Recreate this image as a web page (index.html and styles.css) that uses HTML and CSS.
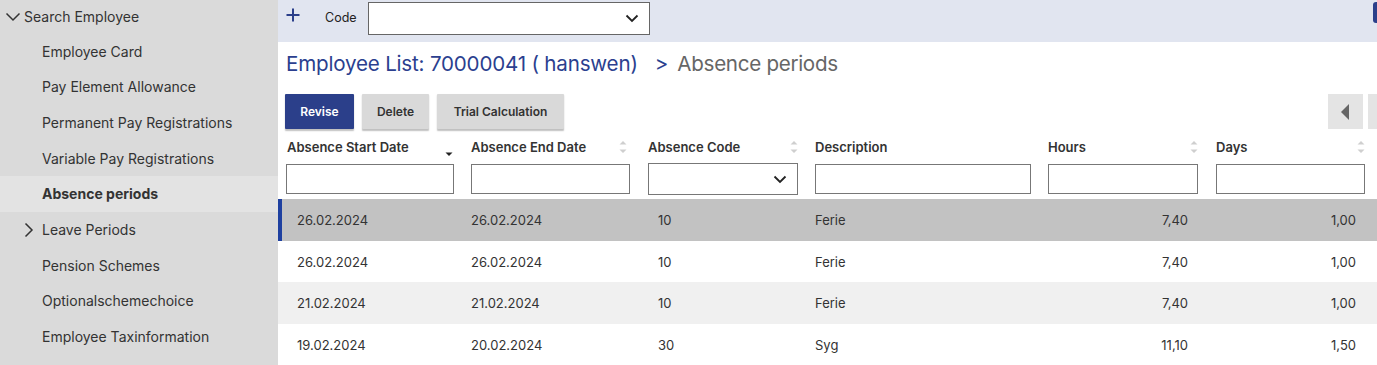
FILE: index.html
```html
<!DOCTYPE html>
<html>
<head>
<meta charset="utf-8">
<link rel="stylesheet" href="styles.css">
</head>
<body>
<aside class="sidebar">
  <div class="nav-item nav-top">
    <svg class="chev-down" width="16" height="10" viewBox="0 0 16 10"><path d="M1.5 1.5 L8 8 L14.5 1.5" fill="none" stroke="#333" stroke-width="1.5"/></svg>
    <span>Search Employee</span>
  </div>
  <div class="nav-item sub">Employee Card</div>
  <div class="nav-item sub">Pay Element Allowance</div>
  <div class="nav-item sub">Permanent Pay Registrations</div>
  <div class="nav-item sub">Variable Pay Registrations</div>
  <div class="nav-item sub active">Absence periods</div>
  <div class="nav-item sub has-chev">
    <svg class="chev-right" width="10" height="16" viewBox="0 0 10 16"><path d="M1.5 1.5 L8 8 L1.5 14.5" fill="none" stroke="#333" stroke-width="1.5"/></svg>
    <span>Leave Periods</span>
  </div>
  <div class="nav-item sub">Pension Schemes</div>
  <div class="nav-item sub">Optionalschemechoice</div>
  <div class="nav-item sub">Employee Taxinformation</div>
</aside>
<main class="content">
  <div class="topbar">
    <svg class="plus" width="14" height="14" viewBox="0 0 14 14"><path d="M7 0.5 V13.5 M0.5 7 H13.5" stroke="#2b3f8a" stroke-width="2"/></svg>
    <span class="code-label">Code</span>
    <div class="select top-select">
      <svg width="14" height="9" viewBox="0 0 14 9"><path d="M1.5 1.5 L7 7 L12.5 1.5" fill="none" stroke="#222" stroke-width="1.8"/></svg>
    </div>
    <div class="spacer"></div>
    <div class="edge-btn"></div>
  </div>
  <div class="title-row">
    <span class="crumb">Employee List: 70000041 ( hanswen)</span>
    <span class="crumb-sep">&gt;</span>
    <span class="crumb-current">Absence periods</span>
  </div>
  <div class="toolbar">
    <button class="btn primary">Revise</button>
    <button class="btn">Delete</button>
    <button class="btn">Trial Calculation</button>
    <div class="spacer"></div>
    <div class="scroll-btn">
      <svg width="10" height="16" viewBox="0 0 10 16"><path d="M9 0 V16 L1 8 Z" fill="#666"/></svg>
    </div>
    <div class="scroll-btn cut"></div>
  </div>
  <div class="grid head">
    <div class="hcell"><span>Absence Start Date</span><svg class="sort" width="8" height="14" viewBox="0 0 8 14"><path d="M0.5 9.5 H7.5 L4 13 Z" fill="#222"/></svg></div>
    <div class="hcell"><span>Absence End Date</span><svg class="sort" width="8" height="14" viewBox="0 0 8 14"><path d="M0.5 4.5 H7.5 L4 1 Z M0.5 9.5 H7.5 L4 13 Z" fill="#cfcfcf"/></svg></div>
    <div class="hcell"><span>Absence Code</span><svg class="sort" width="8" height="14" viewBox="0 0 8 14"><path d="M0.5 4.5 H7.5 L4 1 Z M0.5 9.5 H7.5 L4 13 Z" fill="#cfcfcf"/></svg></div>
    <div class="hcell"><span>Description</span></div>
    <div class="hcell"><span>Hours</span><svg class="sort" width="8" height="14" viewBox="0 0 8 14"><path d="M0.5 4.5 H7.5 L4 1 Z M0.5 9.5 H7.5 L4 13 Z" fill="#cfcfcf"/></svg></div>
    <div class="hcell"><span>Days</span><svg class="sort" width="8" height="14" viewBox="0 0 8 14"><path d="M0.5 4.5 H7.5 L4 1 Z M0.5 9.5 H7.5 L4 13 Z" fill="#cfcfcf"/></svg></div>
  </div>
  <div class="grid filters">
    <div class="fcell"><div class="finput w1"></div></div>
    <div class="fcell"><div class="finput w2"></div></div>
    <div class="fcell"><div class="finput fselect w3"><svg width="14" height="9" viewBox="0 0 14 9"><path d="M1.5 1.5 L7 7 L12.5 1.5" fill="none" stroke="#222" stroke-width="1.8"/></svg></div></div>
    <div class="fcell"><div class="finput w4"></div></div>
    <div class="fcell"><div class="finput w5"></div></div>
    <div class="fcell"><div class="finput w6"></div></div>
  </div>
  <div class="grid row selected">
    <div class="c c1">26.02.2024</div><div class="c c2">26.02.2024</div><div class="c c3">10</div><div class="c c4">Ferie</div><div class="c c5">7,40</div><div class="c c6">1,00</div>
  </div>
  <div class="grid row">
    <div class="c c1">26.02.2024</div><div class="c c2">26.02.2024</div><div class="c c3">10</div><div class="c c4">Ferie</div><div class="c c5">7,40</div><div class="c c6">1,00</div>
  </div>
  <div class="grid row alt">
    <div class="c c1">21.02.2024</div><div class="c c2">21.02.2024</div><div class="c c3">10</div><div class="c c4">Ferie</div><div class="c c5">7,40</div><div class="c c6">1,00</div>
  </div>
  <div class="grid row">
    <div class="c c1">19.02.2024</div><div class="c c2">20.02.2024</div><div class="c c3">30</div><div class="c c4">Syg</div><div class="c c5">11,10</div><div class="c c6">1,50</div>
  </div>
</main>
</body>
</html>
```

FILE: styles.css
```css
* { box-sizing: border-box; }
html, body { margin: 0; padding: 0; }
body {
  display: flex;
  width: 1377px;
  height: 365px;
  overflow: hidden;
  font-family: Inter, "Liberation Sans", sans-serif;
  color: #333;
  background: #fff;
}
.sidebar {
  width: 278px;
  flex: none;
  background: #dadada;
  display: flex;
  flex-direction: column;
}
.nav-item {
  height: 35.67px;
  flex: none;
  display: flex;
  align-items: center;
  font-size: 14px;
  color: #333;
}
.nav-top { height: 33.5px; padding-left: 5px; }
.nav-top .chev-down { margin-right: 3px; }
.sub { padding-left: 42px; }
.sub.has-chev { padding-left: 24px; }
.chev-right { margin-right: 8px; }
.active { background: #e3e3e3; font-weight: 700; }

.content {
  flex: 1;
  min-width: 0;
  display: flex;
  flex-direction: column;
}
.topbar {
  height: 42px;
  flex: none;
  background: #e1e5f0;
  display: flex;
  align-items: flex-start;
  padding-left: 8px;
}
.plus { margin-top: 8px; }
.code-label { font-size: 12.5px; color: #222; margin-left: 25px; margin-top: 10px; }
.select {
  background: #fff;
  border: 1px solid #666;
  display: flex;
  align-items: center;
  justify-content: flex-end;
}
.top-select {
  width: 282px;
  height: 33px;
  margin-top: 2px;
  margin-left: 11px;
  padding-right: 10px;
}
.spacer { flex: 1; }
.edge-btn {
  width: 4px;
  height: 21px;
  margin-top: 2px;
  background: #2b3f8a;
  border-radius: 3px 0 0 3px;
}
.title-row {
  height: 52px;
  flex: none;
  padding-left: 8px;
  padding-top: 9px;
  display: flex;
  align-items: flex-start;
  font-size: 20.6px;
}
.crumb { color: #2b3f8f; letter-spacing: -0.2px; }
.crumb-sep { color: #2b3f8f; margin-left: 17px; }
.crumb-current { color: #666; margin-left: 9px; letter-spacing: -0.3px; }
.toolbar {
  height: 36px;
  flex: none;
  display: flex;
  align-items: stretch;
  padding-left: 7px;
  gap: 8px;
}
.btn {
  font-family: Inter, "Liberation Sans", sans-serif;
  font-size: 12px;
  font-weight: 600;
  color: #333;
  background: #d9d9d9;
  border: none;
  border-radius: 1px;
  padding: 0;
  box-shadow: 0 1.5px 1.5px rgba(0,0,0,0.25);
  height: 35px;
}
.btn.primary { background: #2b3f8a; color: #fff; width: 69px; }
.toolbar .btn:nth-child(2) { width: 67px; }
.toolbar .btn:nth-child(3) { width: 127px; }
.scroll-btn {
  width: 35px;
  height: 35px;
  background: #e4e4e4;
  display: flex;
  align-items: center;
  justify-content: center;
  margin-right: -3px;
}
.scroll-btn svg { margin-right: 2px; }
.scroll-btn.cut { width: 9px; margin-right: 0; }

.grid {
  display: grid;
  grid-template-columns: 185px 177px 167px 233px 168px 169px;
  flex: none;
}
.head { height: 33px; margin-top: 0; }
.hcell {
  display: flex;
  align-items: center;
  justify-content: space-between;
  padding-left: 9px;
  font-size: 13px;
  font-weight: 600;
  color: #333;
}
.hcell:nth-child(1) { padding-left: 9px; padding-right: 10px; }
.hcell:nth-child(2) { padding-left: 8px; padding-right: 13px; }
.hcell:nth-child(3) { padding-left: 8px; padding-right: 9px; }
.hcell:nth-child(4) { padding-left: 8px; }
.hcell:nth-child(5) { padding-left: 8px; padding-right: 10px; }
.hcell:nth-child(6) { padding-left: 8px; padding-right: 12px; }
.hcell:nth-child(1) .sort { margin-top: 6px; }
.filters { height: 36px; align-items: start; }
.fcell { padding-left: 8px; }
.finput {
  height: 30px;
  border: 1px solid #777;
  background: #fff;
  margin-top: 1px;
}
.w1 { width: 168px; }
.w2 { width: 159px; }
.w3 { width: 150px; }
.w4 { width: 216px; }
.w5 { width: 150px; }
.w6 { width: 149px; }
.fselect {
  height: 32px;
  margin-top: 0;
  display: flex;
  align-items: center;
  justify-content: flex-end;
  padding-right: 10px;
}
.row { height: 41.7px; font-size: 13px; color: #333; }
.row.selected { background: #c2c2c2; box-shadow: inset 4px 0 0 #1e40a0; }
.row.alt { background: #f0f0f0; }
.c { display: flex; align-items: center; }
.c1 { padding-left: 19px; }
.c2 { padding-left: 8px; }
.c3 { padding-left: 18px; }
.c4 { padding-left: 8px; }
.c5 { justify-content: flex-end; padding-right: 20px; }
.c6 { justify-content: flex-end; padding-right: 21px; }
```
